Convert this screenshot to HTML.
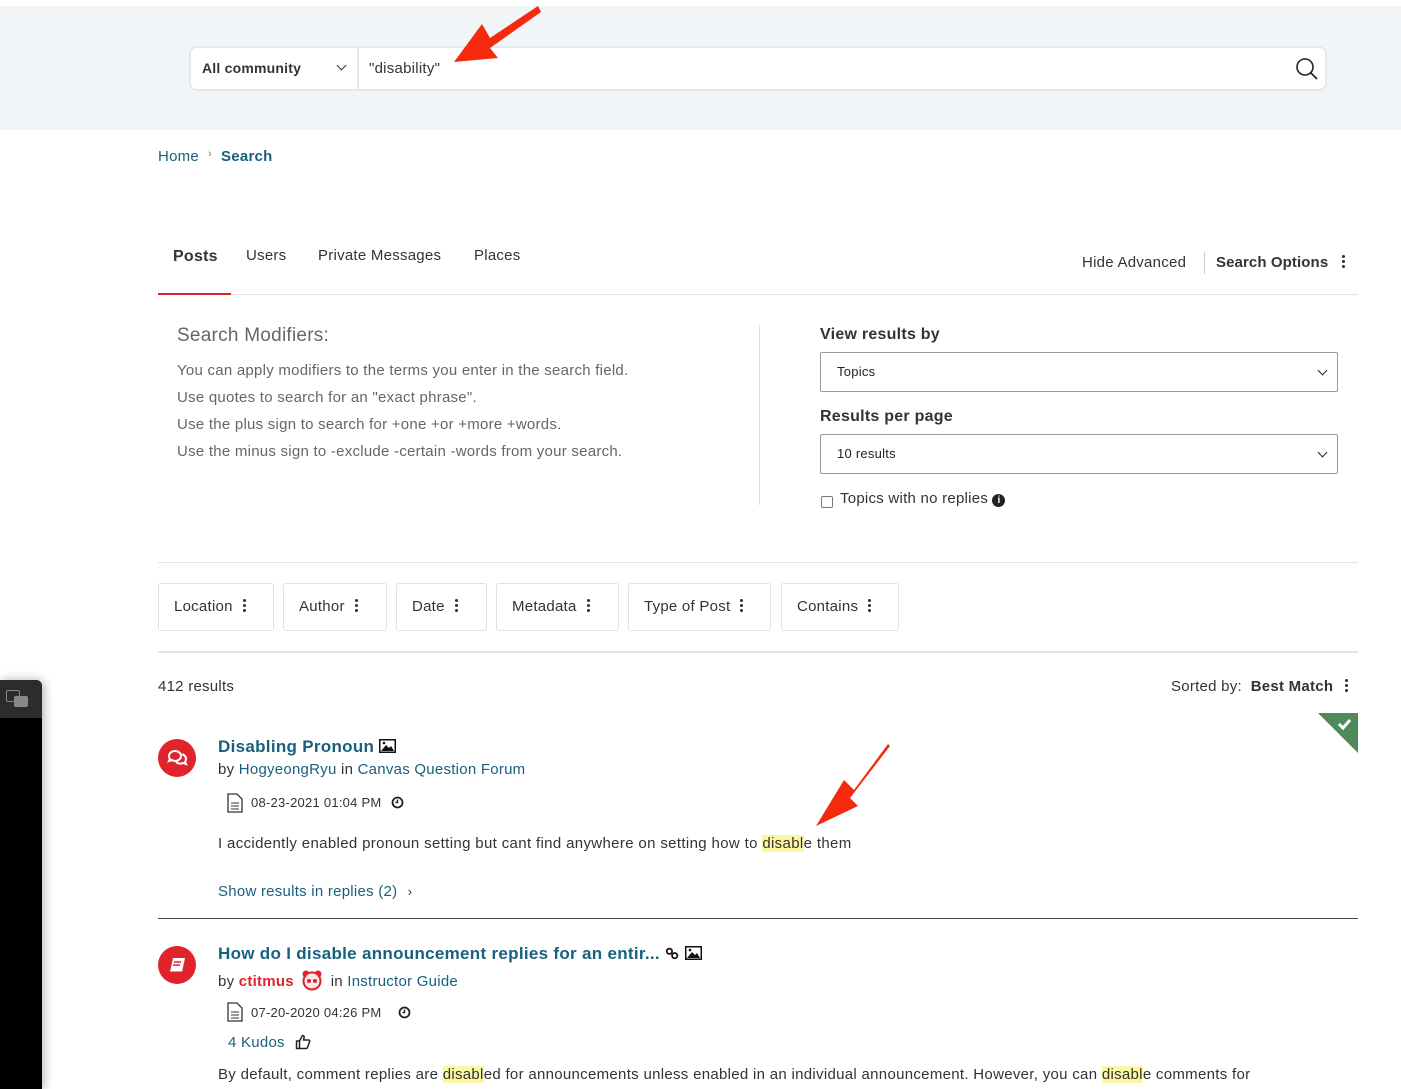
<!DOCTYPE html>
<html><head><meta charset="utf-8"><style>
*{box-sizing:border-box;margin:0;padding:0}
body{width:1401px;height:1089px;position:relative;overflow:hidden;background:#fff;font-family:"Liberation Sans",Arial,sans-serif;color:#333;font-size:15px;letter-spacing:0.25px}
.a{position:absolute;white-space:nowrap}
.top{position:absolute;left:0;top:6px;width:1401px;height:124px;background:#f2f5f7}
.sb{position:absolute;left:189px;top:46px;width:1138px;height:45px;background:#fff;border:2px solid #e6e9ec;border-radius:8px}
.link{color:#19607e}
.btn{position:absolute;top:583px;height:48px;border:1px solid #e0e0e0;border-radius:3px;font-size:15px;color:#333;line-height:46px;padding-left:15px}
.dots{display:inline-block;width:3px;height:14px;margin-left:10px;vertical-align:-1px;background:radial-gradient(circle,#333 1.4px,transparent 1.6px) 0 0/3px 5px repeat-y}
.sel{position:absolute;left:820px;width:518px;height:40px;border:1px solid #999;border-radius:2px;font-size:13px;line-height:38px;padding-left:16px;color:#222}
.sel:after{content:"";position:absolute;right:11px;top:14px;width:6px;height:6px;border-right:1.8px solid #222;border-bottom:1.8px solid #222;transform:rotate(45deg)}
.hl{background:#fdf6a3}
.circ{position:absolute;left:158px;width:38px;height:38px;border-radius:50%;background:#e0242b}
.img{display:inline-block;width:17px;height:14px;vertical-align:-1px}
</style></head><body>
<div class="top"></div>
<div class="sb">
 <div class="a" style="left:11px;top:12px;font-weight:bold;font-size:14px;color:#333;letter-spacing:0.2px">All community</div>
 <div class="a" style="left:147px;top:14px;width:7px;height:7px;border-right:1.5px solid #333;border-bottom:1.5px solid #333;transform:rotate(45deg)"></div>
 <div class="a" style="left:166px;top:0;width:2px;height:41px;background:#e6e9ec"></div>
 <div class="a" style="left:178px;top:12px;font-size:15px;color:#333">"disability"</div>
 <svg class="a" style="left:1103px;top:9px" width="26" height="26" viewBox="0 0 26 26"><circle cx="11" cy="10" r="8" fill="none" stroke="#222" stroke-width="1.6"/><path d="M17 16l6 6" stroke="#222" stroke-width="1.8"/></svg>
</div>
<svg class="a" style="left:450px;top:4px" width="92" height="62" viewBox="0 0 92 62"><path d="M88 2L40 34L32 20L4 58L48 54L40 44L91 8Z" fill="#f5290e"/></svg>

<div class="a link" style="left:158px;top:148px;font-size:15px">Home</div>
<div class="a" style="left:208px;top:148px;font-size:11px;color:#777">›</div>
<div class="a link" style="left:221px;top:148px;font-size:15px;font-weight:bold">Search</div>

<div class="a" style="left:173px;top:248px;font-size:16px;font-weight:bold;color:#333">Posts</div>
<div class="a" style="left:246px;top:247px;font-size:15px">Users</div>
<div class="a" style="left:318px;top:247px;font-size:15px">Private Messages</div>
<div class="a" style="left:474px;top:247px;font-size:15px">Places</div>
<div class="a" style="left:1082px;top:254px;font-size:15px">Hide Advanced</div>
<div class="a" style="left:1204px;top:252px;width:1px;height:22px;background:#ccc"></div>
<div class="a" style="left:1216px;top:254px;font-size:15px;font-weight:bold;letter-spacing:0.1px">Search Options<span class="dots" style="margin-left:14px"></span></div>
<div class="a" style="left:158px;top:294px;width:1200px;height:1px;background:#e3e3e3"></div>
<div class="a" style="left:158px;top:293px;width:73px;height:2px;background:#e0242b"></div>

<div class="a" style="left:177px;top:325px;font-size:19px;color:#666">Search Modifiers:</div>
<div class="a" style="left:177px;top:357px;font-size:15px;color:#666;line-height:27px">You can apply modifiers to the terms you enter in the search field.<br>Use quotes to search for an "exact phrase".<br>Use the plus sign to search for +one +or +more +words.<br>Use the minus sign to -exclude -certain -words from your search.</div>
<div class="a" style="left:759px;top:325px;width:1px;height:180px;background:#ddd"></div>

<div class="a" style="left:820px;top:326px;font-size:16px;font-weight:bold;color:#333">View results by</div>
<div class="sel" style="top:352px">Topics</div>
<div class="a" style="left:820px;top:408px;font-size:16px;font-weight:bold;color:#333">Results per page</div>
<div class="sel" style="top:434px">10 results</div>
<div class="a" style="left:821px;top:496px;width:12px;height:12px;border:1px solid #777;border-radius:2px"></div>
<div class="a" style="left:840px;top:490px;font-size:15px">Topics with no replies <span style="display:inline-block;width:13px;height:13px;border-radius:50%;background:#222;color:#fff;font-size:10px;line-height:13px;text-align:center;font-weight:bold;vertical-align:0">i</span></div>

<div class="a" style="left:158px;top:562px;width:1200px;height:1px;background:#e3e3e3"></div>
<div class="btn" style="left:158px;width:116px">Location<span class="dots"></span></div>
<div class="btn" style="left:283px;width:104px">Author<span class="dots"></span></div>
<div class="btn" style="left:396px;width:91px">Date<span class="dots"></span></div>
<div class="btn" style="left:496px;width:123px">Metadata<span class="dots"></span></div>
<div class="btn" style="left:628px;width:143px">Type of Post<span class="dots"></span></div>
<div class="btn" style="left:781px;width:118px">Contains<span class="dots"></span></div>
<div class="a" style="left:158px;top:651px;width:1200px;height:2px;background:#e3e3e3"></div>

<div class="a" style="left:158px;top:678px;font-size:15px">412 results</div>
<div class="a" style="left:1171px;top:678px;font-size:15px">Sorted by:&nbsp; <b>Best Match</b><span class="dots" style="margin-left:12px"></span></div>
<svg class="a" style="left:1318px;top:713px" width="40" height="40" viewBox="0 0 40 40"><path d="M0 0H40V40Z" fill="#4f8a5a"/><path d="M21 11l4 4 7-8" stroke="#fff" stroke-width="3" fill="none"/></svg>

<div class="circ" style="top:739px"><svg width="38" height="38" viewBox="0 0 38 38"><path d="M11 17c0-3 3-5 6-5s6 2 6 5-3 5-6 5c-1 0-2 0-3-1l-3 1 1-2c-1-1-1-2-1-3z" fill="none" stroke="#fff" stroke-width="2"/><path d="M24 15c2 1 4 2 4 5 0 1 0 2-1 3l1 2-3-1c-2 1-5 1-7-1" fill="none" stroke="#fff" stroke-width="2"/></svg></div>
<div class="a link" style="left:218px;top:737px;font-size:17px;font-weight:bold;letter-spacing:0.3px">Disabling Pronoun <svg class="img" viewBox="0 0 17 14"><rect x="0.75" y="0.75" width="15.5" height="12.5" fill="#fff" stroke="#111" stroke-width="1.5"/><path d="M2 12L7 6l3 3 2-2 3 5z" fill="#111"/><circle cx="5" cy="4" r="1.3" fill="#111"/></svg></div>
<div class="a" style="left:218px;top:761px;font-size:15px">by <span class="link">HogyeongRyu</span> in <span class="link">Canvas Question Forum</span></div>
<svg class="a" style="left:227px;top:793px" width="16" height="20" viewBox="0 0 16 20"><path d="M1 1h9l5 5v13H1z" fill="none" stroke="#333" stroke-width="1.3"/><path d="M4 10h8M4 13h8M4 16h8" stroke="#333"/></svg>
<div class="a" style="left:251px;top:795px;font-size:13px">08-23-2021 01:04 PM</div>
<svg class="a" style="left:391px;top:796px" width="13" height="13" viewBox="0 0 13 13"><circle cx="6.5" cy="6.5" r="5" fill="none" stroke="#222" stroke-width="1.8"/><path d="M6.5 3.5v3h-2" stroke="#222" stroke-width="1.4" fill="none"/></svg>
<div class="a" style="left:218px;top:835px;font-size:15px;letter-spacing:0.35px">I accidently enabled pronoun setting but cant find anywhere on setting how to <span class="hl">disabl</span>e them</div>
<svg class="a" style="left:812px;top:742px" width="78" height="86" viewBox="0 0 78 86"><path d="M76 2L42 48L32 38L4 84L46 64L38 56L78 4Z" fill="#f5290e"/></svg>
<div class="a link" style="left:218px;top:883px;font-size:15px">Show results in replies (2) <span style="font-size:13px;color:#333;margin-left:6px">›</span></div>
<div class="a" style="left:158px;top:918px;width:1200px;height:1px;background:#444"></div>

<div class="circ" style="top:946px"><svg width="38" height="38" viewBox="0 0 38 38"><path d="M15 12h12l-3 14H12z" fill="#fff"/><path d="M16 16h7M15 19h7" stroke="#e0242b" stroke-width="1.4"/><path d="M12 26h12" stroke="#e0242b" stroke-width="1"/></svg></div>
<div class="a link" style="left:218px;top:944px;font-size:17px;font-weight:bold;letter-spacing:0.3px">How do I disable announcement replies for an entir... <svg class="img" viewBox="0 0 17 14" style="width:15px"><circle cx="5" cy="5" r="3" fill="none" stroke="#111" stroke-width="2"/><circle cx="11" cy="10" r="3" fill="none" stroke="#111" stroke-width="2"/></svg> <svg class="img" viewBox="0 0 17 14"><rect x="0.75" y="0.75" width="15.5" height="12.5" fill="#fff" stroke="#111" stroke-width="1.5"/><path d="M2 12L7 6l3 3 2-2 3 5z" fill="#111"/><circle cx="5" cy="4" r="1.3" fill="#111"/></svg></div>
<div class="a" style="left:218px;top:969px;font-size:15px">by <b style="color:#e0242b">ctitmus</b> <svg style="vertical-align:-5px;margin:0 3px" width="22" height="22" viewBox="0 0 22 22"><circle cx="5" cy="5" r="3.5" fill="#e0242b"/><circle cx="17" cy="5" r="3.5" fill="#e0242b"/><circle cx="11" cy="12" r="8.5" fill="#fde8e8" stroke="#e0242b" stroke-width="2"/><circle cx="8" cy="12" r="2" fill="#e0242b"/><circle cx="14" cy="12" r="2" fill="#e0242b"/></svg> in <span class="link">Instructor Guide</span></div>
<svg class="a" style="left:227px;top:1002px" width="16" height="20" viewBox="0 0 16 20"><path d="M1 1h9l5 5v13H1z" fill="none" stroke="#333" stroke-width="1.3"/><path d="M4 10h8M4 13h8M4 16h8" stroke="#333"/></svg>
<div class="a" style="left:251px;top:1005px;font-size:13px">07-20-2020 04:26 PM</div>
<svg class="a" style="left:398px;top:1006px" width="13" height="13" viewBox="0 0 13 13"><circle cx="6.5" cy="6.5" r="5" fill="none" stroke="#222" stroke-width="1.8"/><path d="M6.5 3.5v3h-2" stroke="#222" stroke-width="1.4" fill="none"/></svg>
<div class="a link" style="left:228px;top:1034px;font-size:15px">4 Kudos</div>
<svg class="a" style="left:295px;top:1034px" width="16" height="16" viewBox="0 0 16 16"><path d="M1.5 7h3v7.5h-3zM4.5 7l3-5.5c1.5 0 2 1 1.5 2.5L8.5 6h5c1 0 1.5 1 1 2l-2 5.5c-.3.7-1 1-1.5 1h-6.5" fill="none" stroke="#222" stroke-width="1.5" stroke-linejoin="round"/></svg>
<div class="a" style="left:218px;top:1066px;font-size:15px;letter-spacing:0.3px">By default, comment replies are <span class="hl">disabl</span>ed for announcements unless enabled in an individual announcement. However, you can <span class="hl">disabl</span>e comments for</div>

<div class="a" style="left:0;top:680px;width:42px;height:409px;background:#000;border-radius:0 6px 0 0;box-shadow:2px 0 10px rgba(0,0,0,.3)"></div>
<div class="a" style="left:0;top:680px;width:42px;height:38px;background:#2c2c2e;border-radius:0 6px 0 0"></div>
<div class="a" style="left:6px;top:690px;width:14px;height:12px;border:1.5px solid #888;border-radius:2px"></div>
<div class="a" style="left:14px;top:696px;width:14px;height:11px;background:#888;border-radius:2px"></div>
</body></html>
